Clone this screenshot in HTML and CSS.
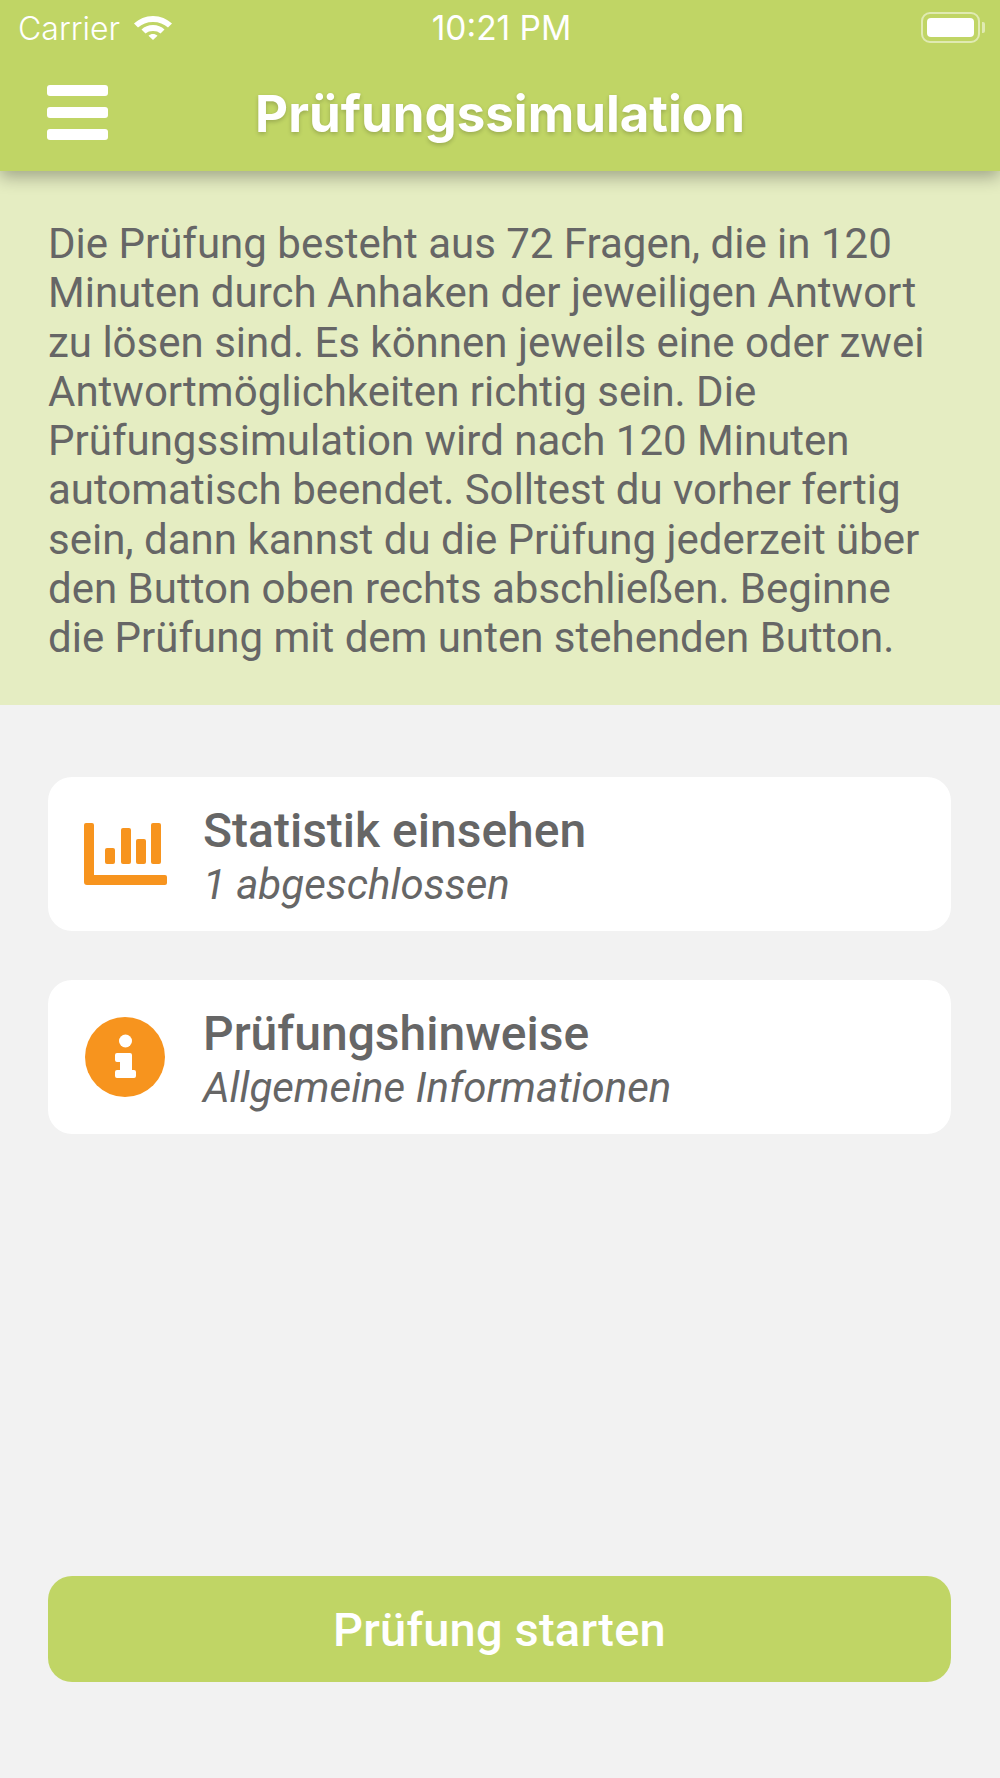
FILE: index.html
```html
<!DOCTYPE html>
<html lang="de">
<head>
<meta charset="utf-8">
<title>Prüfungssimulation</title>
<link rel="stylesheet" href="styles.css">
</head>
<body>
<div class="screen">
  <header class="top">
    <div class="status">
      <div class="status-left">
        <span>Carrier</span>
        <svg class="wifi" viewBox="0 0 40 28" width="40" height="28"><path d="M20 4C12.500 4 6 7 1 11.500L5 15.500C9 12 14 10 20 10C26 10 31 12 35 15.500L39 11.500C34 7 27.500 4 20 4Z" fill="#fff"/><path d="M20 13C15.500 13 11.500 14.700 8.500 17.500L12.500 21.500C14.500 19.800 17 19 20 19C23 19 25.500 19.800 27.500 21.500L31.500 17.500C28.500 14.700 24.500 13 20 13Z" fill="#fff"/><path d="M20 22C18.300 22 16.800 22.600 15.500 23.700L20 28L24.500 23.700C23.200 22.600 21.700 22 20 22Z" fill="#fff"/></svg>
      </div>
      <span class="time">10:21 PM</span>
      <div class="battery"><span class="battery-body"><span class="battery-fill"></span></span><span class="battery-tip"></span></div>
    </div>
    <div class="nav">
      <div class="burger"><span></span><span></span><span></span></div>
      <h1 class="title">Prüfungssimulation</h1>
    </div>
  </header>
  <section class="intro">
    <p>Die Prüfung besteht aus 72 Fragen, die in 120 Minuten durch Anhaken der jeweiligen Antwort zu lösen sind. Es können jeweils eine oder zwei Antwortmöglichkeiten richtig sein. Die Prüfungssimulation wird nach 120 Minuten automatisch beendet. Solltest du vorher fertig sein, dann kannst du die Prüfung jederzeit über den Button oben rechts abschließen. Beginne die Prüfung mit dem unten stehenden Button.</p>
  </section>
  <main class="content">
    <div class="cards">
      <div class="card">
        <svg class="icon" viewBox="0 0 83 62" width="83" height="62"><g fill="#f7941e"><path d="M2 0h6a2 2 0 0 1 2 2V52H81a2 2 0 0 1 2 2v6a2 2 0 0 1-2 2H3a3 3 0 0 1-3-3V2a2 2 0 0 1 2-2Z"/><rect x="21" y="25" width="10" height="16" rx="2"/><rect x="37" y="5" width="10" height="36" rx="2"/><rect x="52" y="16" width="10" height="25" rx="2"/><rect x="67" y="0" width="10" height="41" rx="2"/></g></svg>
        <div class="card-text"><div class="card-title">Statistik einsehen</div><div class="card-sub">1 abgeschlossen</div></div>
      </div>
      <div class="card">
        <svg class="icon" viewBox="0 0 83 80" width="83" height="80"><circle cx="41" cy="40" r="40" fill="#f7941e"/><circle cx="41.500" cy="24" r="6.500" fill="#fff"/><path d="M33 36h13a2 2 0 0 1 2 2V53h2a2 2 0 0 1 2 2v4a2 2 0 0 1-2 2H33a2 2 0 0 1-2-2v-4a2 2 0 0 1 2-2h3V45h-3a2 2 0 0 1-2-2v-5a2 2 0 0 1 2-2Z" fill="#fff"/></svg>
        <div class="card-text"><div class="card-title">Prüfungshinweise</div><div class="card-sub">Allgemeine Informationen</div></div>
      </div>
    </div>
    <button class="start" type="button">Prüfung starten</button>
  </main>
</div>
</body>
</html>
```
FILE: styles.css
```css
* { box-sizing: border-box; }
html, body { margin: 0; padding: 0; }
body { font-family: Roboto, "Liberation Sans", sans-serif; background: #f2f2f2; }
.screen { width: 1000px; height: 1778px; display: flex; flex-direction: column; background: #f2f2f2; overflow: hidden; }
.top { position: relative; z-index: 2; height: 171px; background: #c0d565; box-shadow: 0 6px 16px rgba(0,0,0,.3); color: #fff; flex: none; }
.status { height: 56px; padding: 0 15px 0 18px; display: grid; grid-template-columns: 1fr auto 1fr; align-items: center; font-family: Inter, Roboto, sans-serif; font-size: 32px; }
.status-left { display: flex; align-items: center; gap: 13px; font-weight: 300; }
.wifi { display: block; margin-bottom: 4px; }
.time { font-weight: 400; font-size: 33.500px; }
.battery { justify-self: end; display: flex; align-items: center; gap: 2px; margin-bottom: 2px; }
.battery-body { width: 59px; height: 31px; padding: 4px; border: 2px solid rgba(255,255,255,.5); border-radius: 9px; display: block; }
.battery-fill { display: block; width: 100%; height: 100%; background: #fff; border-radius: 4px; }
.battery-tip { width: 3px; height: 11px; background: rgba(255,255,255,.5); border-radius: 0 2px 2px 0; }
.nav { height: 115px; position: relative; display: flex; align-items: center; justify-content: center; }
.burger { position: absolute; left: 47px; top: 29px; width: 61px; display: flex; flex-direction: column; gap: 11px; }
.burger span { display: block; height: 11px; background: #fff; border-radius: 3px; }
.title { margin: 0; font-family: Inter, Roboto, sans-serif; font-size: 51px; font-weight: 700; line-height: 1; text-shadow: 0 2px 4px rgba(0,0,0,.2); }
.intro { height: 534px; flex: none; background: #e5edc2; padding: 48px 48px 0; }
.intro p { margin: 0; color: #666; font-size: 42px; line-height: 49.300px; }
.content { flex: 1; padding: 72px 49px 96px 48px; display: flex; flex-direction: column; justify-content: space-between; }
.cards { display: flex; flex-direction: column; gap: 49px; }
.card { height: 154px; background: #fff; border-radius: 24px; display: flex; align-items: center; padding-left: 36px; }
.icon { flex: none; display: block; }
.card-text { margin-left: 36px; color: #666; }
.card-title { font-size: 48px; font-weight: 500; line-height: 61px; }
.card-sub { font-size: 42px; font-style: italic; line-height: 48px; }
.start { height: 106px; border: 0; border-radius: 24px; background: #c0d565; color: #fff; font-family: Roboto, sans-serif; font-size: 47px; font-weight: 500; letter-spacing: .2px; }
```
